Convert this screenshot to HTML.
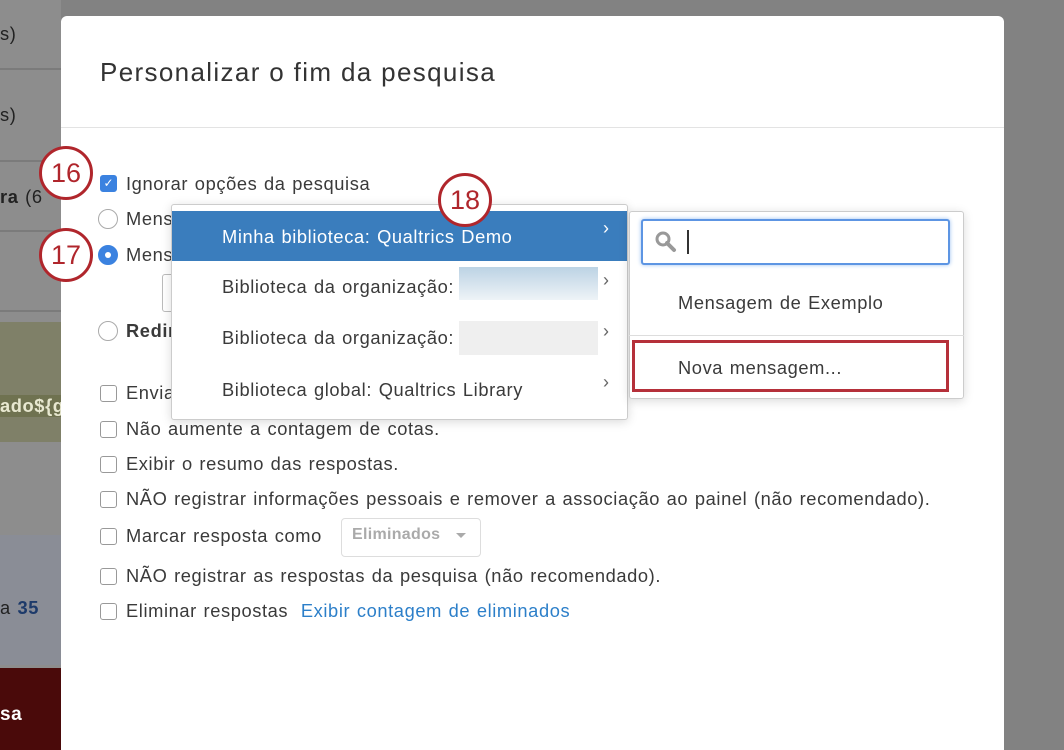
<!DOCTYPE html>
<html><head><meta charset="utf-8"><style>
*{box-sizing:border-box;margin:0;padding:0}
html,body{width:1064px;height:750px;overflow:hidden}
body{background:#828282;font-family:"Liberation Sans",sans-serif;position:relative;color:#333}
.a{position:absolute}
.bgl{left:0;top:0;width:61px;height:750px;background:#8d8d8d}
.ln{left:0;width:61px;height:2px;background:#7b7b7b}
.modal{left:61px;top:16px;width:943px;height:734px;background:#fff;border-radius:6px 6px 0 0}
.t{font-size:18px;letter-spacing:0.6px;word-spacing:1px;color:#3a3a3a;white-space:nowrap;font-size:18.3px}
.cb{width:17px;height:17px;border:1px solid #999;border-radius:3px;background:#fff}
.rd{width:20px;height:20px;border:1px solid #aaa;border-radius:50%;background:#fff}
.circ{width:54px;height:54px;border:3px solid #b0262c;border-radius:50%;background:#fff;color:#b0262c;font-size:27px;text-align:center;line-height:48px}
.menu{background:#fff;border:1px solid #ccc;box-shadow:0 2px 10px rgba(0,0,0,.15);border-radius:3px}
.chev{font-size:18px;color:#666}
</style></head><body>
<div class="a bgl"></div>
<div class="a ln" style="top:68px"></div>
<div class="a ln" style="top:160px"></div>
<div class="a ln" style="top:230px"></div>
<div class="a ln" style="top:310px"></div>
<div class="a t" style="left:0;top:23px;color:#222">s)</div>
<div class="a t" style="left:0;top:104px;color:#222">s)</div>
<div class="a t" style="left:0;top:186px;color:#222;font-weight:bold">ra <span style="font-weight:normal">(6</span></div>
<div class="a" style="left:0;top:322px;width:61px;height:120px;background:#7f8068"></div>
<div class="a" style="left:0;top:395px;width:61px;height:22px;background:#6f7250"></div>
<div class="a t" style="left:0;top:395px;color:#e8e8d0;font-weight:bold">ado${g</div>
<div class="a" style="left:0;top:535px;width:61px;height:130px;background:#8a8d96"></div>
<div class="a t" style="left:0;top:597px;color:#222">a <b style="color:#1d3a6a">35</b></div>
<div class="a" style="left:0;top:668px;width:61px;height:82px;background:#4a0a0a"></div>
<div class="a t" style="left:0;top:704px;color:#fff;font-weight:bold;font-size:19px">sa</div>

<div class="a modal"></div>
<div class="a" style="left:100px;top:57px;font-size:26px;letter-spacing:1.35px;color:#333">Personalizar o fim da pesquisa</div>
<div class="a" style="left:61px;top:127px;width:943px;height:1px;background:#e3e3e3"></div>

<div class="a cb" style="left:100px;top:175px;background:#3b82e0;border-color:#3b82e0;color:#fff;font-size:12px;text-align:center;line-height:15px">✓</div>
<div class="a t" style="left:126px;top:173px">Ignorar opções da pesquisa</div>
<div class="a rd" style="left:98px;top:209px"></div>
<div class="a t" style="left:126px;top:208px">Mens</div>
<div class="a rd" style="left:98px;top:245px;background:#3b82e0;border-color:#3b82e0"><div style="width:6px;height:6px;background:#fff;border-radius:50%;margin:6px"></div></div>
<div class="a t" style="left:126px;top:244px">Mens</div>
<div class="a" style="left:162px;top:274px;width:20px;height:38px;border:1px solid #bbb;border-radius:3px"></div>
<div class="a rd" style="left:98px;top:321px"></div>
<div class="a t" style="left:126px;top:320px;font-weight:bold">Redir</div>
<div class="a cb" style="left:100px;top:385px"></div><div class="a t" style="left:126px;top:382px">Envia</div>
<div class="a cb" style="left:100px;top:421px"></div><div class="a t" style="left:126px;top:418px">Não aumente a contagem de cotas.</div>
<div class="a cb" style="left:100px;top:456px"></div><div class="a t" style="left:126px;top:453px">Exibir o resumo das respostas.</div>
<div class="a cb" style="left:100px;top:491px"></div><div class="a t" style="left:126px;top:488px">NÃO registrar informações pessoais e remover a associação ao painel (não recomendado).</div>
<div class="a cb" style="left:100px;top:528px"></div><div class="a t" style="left:126px;top:525px">Marcar resposta como</div>
<div class="a" style="left:341px;top:518px;width:140px;height:39px;border:1px solid #ddd;border-radius:4px"></div>
<div class="a t" style="left:352px;top:526px;color:#aaa;font-weight:bold;font-size:16px;letter-spacing:0.3px">Eliminados</div>
<div class="a" style="left:456px;top:533px;border-left:5px solid transparent;border-right:5px solid transparent;border-top:5px solid #aaa"></div>
<div class="a cb" style="left:100px;top:568px"></div><div class="a t" style="left:126px;top:565px">NÃO registrar as respostas da pesquisa (não recomendado).</div>
<div class="a cb" style="left:100px;top:603px"></div><div class="a t" style="left:126px;top:600px">Eliminar respostas <span style="color:#2c7fc9;margin-left:6px">Exibir contagem de eliminados</span></div>

<div class="a menu" style="left:171px;top:204px;width:457px;height:216px"></div>
<div class="a" style="left:172px;top:211px;width:455px;height:50px;background:#3a7dbd"></div>
<div class="a t" style="left:222px;top:226px;color:#fff">Minha biblioteca: Qualtrics Demo</div>
<div class="a chev" style="left:603px;top:218px;color:#fff">›</div>
<div class="a t" style="left:222px;top:276px">Biblioteca da organização:</div>
<div class="a" style="left:459px;top:267px;width:139px;height:33px;background:linear-gradient(#bcd3e4,#eef3f7)"></div>
<div class="a chev" style="left:603px;top:270px">›</div>
<div class="a t" style="left:222px;top:327px">Biblioteca da organização:</div>
<div class="a" style="left:459px;top:321px;width:139px;height:34px;background:#efefef"></div>
<div class="a chev" style="left:603px;top:321px">›</div>
<div class="a t" style="left:222px;top:379px">Biblioteca global: Qualtrics Library</div>
<div class="a chev" style="left:603px;top:372px">›</div>

<div class="a menu" style="left:629px;top:211px;width:335px;height:188px"></div>
<div class="a" style="left:641px;top:219px;width:309px;height:46px;border:2px solid #5d95e3;border-radius:3px;box-shadow:0 0 4px #9cc0f0;background:#fff"></div>
<svg class="a" style="left:654px;top:230px" width="26" height="24" viewBox="0 0 26 24"><circle cx="9" cy="9" r="6" fill="none" stroke="#999" stroke-width="3"/><path d="M13 13l7 7" stroke="#999" stroke-width="4" stroke-linecap="round"/></svg>
<div class="a" style="left:687px;top:230px;width:2px;height:24px;background:#333"></div>
<div class="a t" style="left:678px;top:292px">Mensagem de Exemplo</div>
<div class="a" style="left:629px;top:335px;width:335px;height:1px;background:#ddd"></div>
<div class="a" style="left:632px;top:340px;width:317px;height:52px;border:3px solid #b5303a"></div>
<div class="a t" style="left:678px;top:357px">Nova mensagem...</div>

<div class="a circ" style="left:39px;top:146px">16</div>
<div class="a circ" style="left:39px;top:228px">17</div>
<div class="a circ" style="left:438px;top:173px">18</div>
</body></html>
